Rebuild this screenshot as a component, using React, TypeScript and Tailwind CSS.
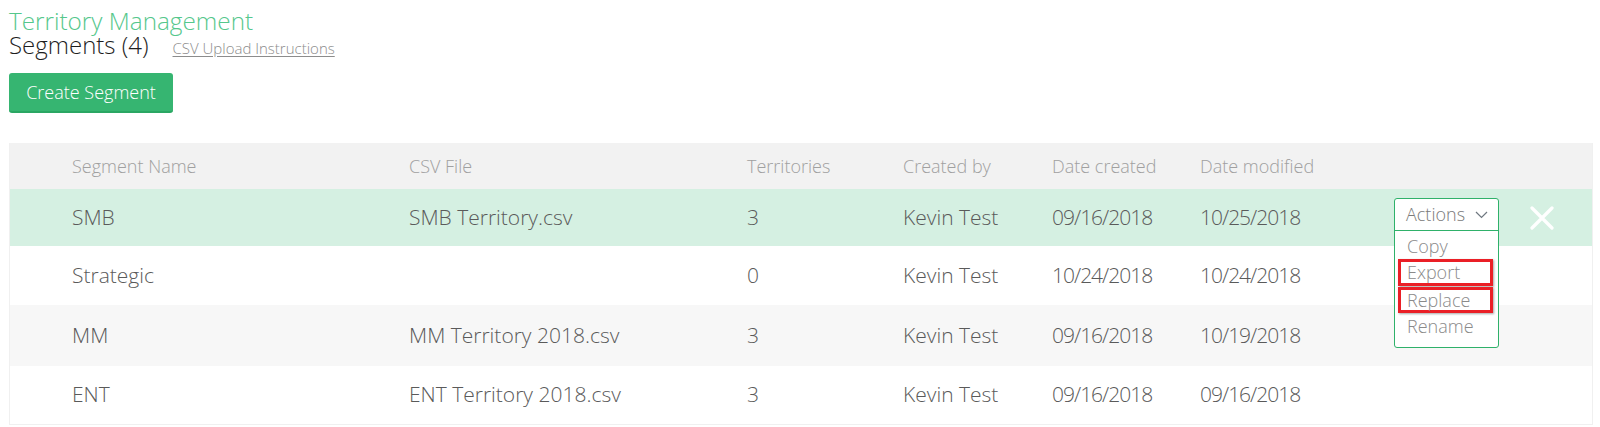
import React from "react";

// ──────────────────────────────────────────────
// Data
// ──────────────────────────────────────────────

interface Segment {
  name: string;
  file: string;
  territories: number;
  createdBy: string;
  created: string;
  modified: string;
  rowClass: string;
}

const segments: Segment[] = [
  { name: "SMB", file: "SMB Territory.csv", territories: 3, createdBy: "Kevin Test", created: "09/16/2018", modified: "10/25/2018", rowClass: "h-[57px] bg-[#d5f0e2]" },
  { name: "Strategic", file: "", territories: 0, createdBy: "Kevin Test", created: "10/24/2018", modified: "10/24/2018", rowClass: "h-[59px] bg-white" },
  { name: "MM", file: "MM Territory 2018.csv", territories: 3, createdBy: "Kevin Test", created: "09/16/2018", modified: "10/19/2018", rowClass: "h-[61px] bg-[#f7f7f7]" },
  { name: "ENT", file: "ENT Territory 2018.csv", territories: 3, createdBy: "Kevin Test", created: "09/16/2018", modified: "09/16/2018", rowClass: "h-[58px] bg-white" },
];

const grid = "grid grid-cols-[62px_337px_338px_156px_149px_148px_194px_136px_1fr] items-center";

// ──────────────────────────────────────────────
// Actions dropdown (open on the first row)
// ──────────────────────────────────────────────

const menuItems = [
  { label: "Copy", flagged: false, box: "h-[26px] mt-[2px]" },
  { label: "Export", flagged: true, box: "h-[27px] mb-[1px]" },
  { label: "Replace", flagged: true, box: "h-[26px]" },
  { label: "Rename", flagged: false, box: "h-[26px]" },
];

function ActionsMenu() {
  return (
    <div className="absolute left-0 top-[9px] z-10 w-[105px] h-[150px] rounded-[3px] border-[1.5px] border-[#2fb16a] bg-white">
      <div className="h-[32px] flex items-center justify-between pl-[11px] pr-[10px] border-b-[1.5px] border-[#2fb16a] text-[18px] text-[#7a7a7a]">
        <span>Actions</span>
        <svg width="13" height="8" viewBox="0 0 13 8" fill="none" stroke="#6f7880" strokeWidth="1.2">
          <path d="M1 1l5.5 5.5L12 1" />
        </svg>
      </div>
      <div>
        {menuItems.map((item) => (
          <div key={item.label} className={`${item.box} pl-[3px] pr-[5px]`}>
            <div
              className={
                item.flagged
                  ? "h-full flex items-center pl-[6px] border-[3px] border-[#ea1f26] shadow-[1px_1px_2px_rgba(0,0,0,0.35)] text-[18px] text-[#8a8a8a]"
                  : "h-full flex items-center pl-[9px] text-[18px] text-[#8a8a8a]"
              }
            >
              {item.label}
            </div>
          </div>
        ))}
      </div>
    </div>
  );
}

// ──────────────────────────────────────────────
// Page
// ──────────────────────────────────────────────

export default function App() {
  return (
    <div className="min-h-[427px] bg-white pl-[9px] pr-[7px] pt-[9px] font-['Open_Sans',sans-serif] font-light">
      {/* Heading */}
      <div className="text-[24.3px] leading-6 text-[#55c78c]">Territory Management</div>
      <div className="flex items-baseline h-6 leading-6">
        <span className="text-[24px] text-[#1e1e1e]">Segments (4)</span>
        <a className="ml-[24px] text-[15px] leading-4 text-[#8c8c8c] underline underline-offset-2 decoration-[#8c8c8c]">
          CSV Upload Instructions
        </a>
      </div>

      <button className="mt-[16px] h-[40px] w-[164px] rounded-[3px] bg-[#36b571] border-b-2 border-[#2aa763] text-[18px] font-light text-white">
        Create Segment
      </button>

      {/* Table */}
      <div className="mt-[30px] border-x border-b border-[#f0f0f0]">
        <div className={`${grid} h-[46px] bg-[#f2f2f2] text-[18px] text-[#a0a0a0]`}>
          <div />
          <div>Segment Name</div>
          <div>CSV File</div>
          <div>Territories</div>
          <div>Created by</div>
          <div>Date created</div>
          <div>Date modified</div>
          <div />
          <div />
        </div>

        {segments.map((s, i) => (
          <div key={s.name} className={`${grid} ${s.rowClass} text-[21px] text-[#5a5a5a]`}>
            <div />
            <div>{s.name}</div>
            <div>{s.file}</div>
            <div className="tracking-[-1px]">{s.territories}</div>
            <div>{s.createdBy}</div>
            <div className="tracking-[-1px]">{s.created}</div>
            <div className="tracking-[-1px]">{s.modified}</div>
            <div className="relative self-stretch">{i === 0 && <ActionsMenu />}</div>
            <div>
              {i === 0 && (
                <svg width="24" height="24" viewBox="0 0 24 24" fill="none" stroke="white" strokeWidth="3.2" strokeLinecap="round">
                  <path d="M2 2l20 20M22 2L2 22" />
                </svg>
              )}
            </div>
          </div>
        ))}
      </div>
    </div>
  );
}
